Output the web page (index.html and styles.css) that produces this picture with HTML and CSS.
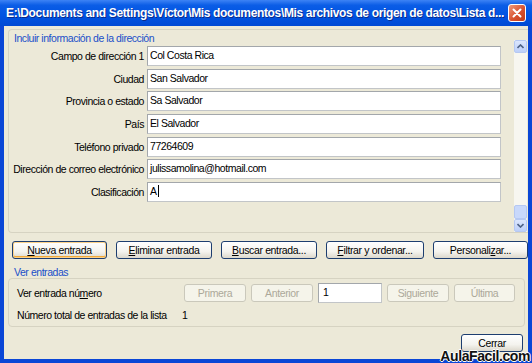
FILE: index.html
```html
<!DOCTYPE html>
<html lang="es">
<head>
    <meta charset="UTF-8">
    <title>Lista de direcciones</title>
    <link rel="stylesheet" href="styles.css">
</head>
<body>
    <div class="window">
        <div class="titlebar">
            <span class="title">E:\Documents and Settings\Víctor\Mis documentos\Mis archivos de origen de datos\Lista d...</span>
            <span class="close">
                <svg width="16" height="16" viewBox="0 0 16 16">
                    <path d="M4.5 4.5 L11.5 11.5 M11.5 4.5 L4.5 11.5" stroke="#fff" stroke-width="2" stroke-linecap="round"/>
                </svg>
            </span>
        </div>

        <div class="client">
            <div class="panel">
                <div class="fields">
                    <div class="legend">Incluir información de la dirección</div>
                    <div class="form">
                        <label>Campo de dirección 1</label><div class="field">Col Costa Rica</div>
                        <label>Ciudad</label><div class="field">San Salvador</div>
                        <label>Provincia o estado</label><div class="field">Sa Salvador</div>
                        <label>País</label><div class="field">El Salvador</div>
                        <label>Teléfono privado</label><div class="field">77264609</div>
                        <label>Dirección de correo electrónico</label><div class="field">julissamolina@hotmail.com</div>
                        <label>Clasificación</label><div class="field">A<span class="caret"></span></div>
                    </div>
                </div>
                <div class="scrollbar">
                    <div class="sb-btn">
                        <svg width="7" height="5" viewBox="0 0 7 5"><path d="M0.5 4 L3.5 1 L6.5 4" fill="none" stroke="#4d6185" stroke-width="1.6"/></svg>
                    </div>
                    <div class="sb-track"></div>
                    <div class="sb-thumb"></div>
                    <div class="sb-btn">
                        <svg width="7" height="5" viewBox="0 0 7 5"><path d="M0.5 1 L3.5 4 L6.5 1" fill="none" stroke="#4d6185" stroke-width="1.6"/></svg>
                    </div>
                </div>
            </div>

            <div class="actions">
                <button class="btn btn-default w95"><u>N</u>ueva entrada</button>
                <button class="btn w96"><u>E</u>liminar entrada</button>
                <button class="btn w96"><u>B</u>uscar entrada...</button>
                <button class="btn w98"><u>F</u>iltrar y ordenar...</button>
                <button class="btn w95">Personali<u>z</u>ar...</button>
            </div>

            <div class="legend legend-ver">Ver entradas</div>
            <div class="group">
                <div class="nav-row">
                    <span class="nav-label">Ver entrada nú<u>m</u>ero</span>
                    <button class="btn disabled w62">Primera</button>
                    <button class="btn disabled w62">Anterior</button>
                    <div class="field num">1</div>
                    <button class="btn disabled w62">Siguiente</button>
                    <button class="btn disabled w61">Última</button>
                </div>
                <div class="total-row">
                    <span class="nav-label total-label">Número total de entradas de la lista</span>
                    <span>1</span>
                </div>
            </div>

            <div class="footer">
                <button class="btn w62">Cerrar</button>
            </div>
        </div>

        <div class="watermark">AulaFacil.com</div>
    </div>
</body>
</html>
```

FILE: styles.css
```css
body {
    margin: 0;
    padding: 0;
    font-family: "Liberation Sans", Arial, sans-serif;
    background: #fff;
}
.window {
    position: relative;
    width: 532px;
    height: 363px;
    background: #0a46d6;
    display: flex;
    flex-direction: column;
    overflow: hidden;
}
.titlebar {
    height: 26px;
    flex: none;
    display: flex;
    align-items: center;
    padding-left: 6px;
    background: linear-gradient(#3d83f5 0%, #0b5de6 20%, #0054e3 55%, #0049d4 100%);
}
.title {
    color: #fff;
    font-weight: bold;
    font-size: 12px;
    letter-spacing: -0.35px;
    white-space: nowrap;
    text-shadow: 1px 1px 0 #0b2a8a;
    flex: 1;
}
.close {
    width: 16px;
    height: 16px;
    margin-right: 6px;
    border: 1px solid #fff;
    border-radius: 3px;
    background: linear-gradient(135deg, #ef9a7c, #d8522f 55%, #c13b17);
    display: flex;
}
.client {
    flex: 1;
    margin: 0 4px 4px 4px;
    background: #ece9d8;
    padding-left: 4px;
    font-size: 10.5px;
    letter-spacing: -0.45px;
    color: #000;
}
.panel {
    margin-top: 3px;
    height: 202px;
    display: flex;
    border: 1px solid #d6d3c2;
    border-right: none;
    border-radius: 4px 0 0 4px;
}
.fields {
    flex: 1;
}
.legend {
    color: #1a4fc9;
    height: 12px;
    line-height: 12px;
    padding-left: 5px;
    margin-top: 2px;
}
.form {
    margin-top: 2px;
    display: grid;
    grid-template-columns: 138px 354px;
    grid-auto-rows: 20px;
    row-gap: 2.67px;
}
.form label {
    text-align: right;
    padding-right: 3px;
    line-height: 20px;
    white-space: nowrap;
}
.field {
    box-sizing: border-box;
    height: 20px;
    border: 1px solid #a3a7ab;
    border-right-color: #c2c5c8;
    border-bottom-color: #c2c5c8;
    background: #fff;
    padding-left: 2px;
    line-height: 16px;
    white-space: nowrap;
}
.caret {
    display: inline-block;
    width: 1px;
    height: 12px;
    background: #000;
    vertical-align: -2px;
    margin-left: 1px;
}
.scrollbar {
    width: 13px;
    margin: 10px 1px 0 0;
    display: flex;
    flex-direction: column;
    background: #f7f6f0;
}
.sb-btn {
    height: 13px;
    flex: none;
    box-sizing: border-box;
    border: 1px solid #b5c8f2;
    border-radius: 2px;
    background: linear-gradient(#dbe6fd, #bccff9);
    display: flex;
    align-items: center;
    justify-content: center;
}
.sb-track {
    flex: 1;
}
.sb-thumb {
    height: 14px;
    box-sizing: border-box;
    border: 1px solid #b5c8f2;
    border-radius: 2px;
    background: #c8d8fb;
}
.actions {
    display: flex;
    gap: 9px;
    padding-left: 4px;
    margin-top: 8px;
}
.btn {
    box-sizing: border-box;
    height: 18px;
    padding: 0;
    border: 1px solid #1d3e70;
    border-radius: 3px;
    background: linear-gradient(#ffffff, #f4f3ee 60%, #dcd8cc);
    font-family: "Liberation Sans", Arial, sans-serif;
    font-size: 10.5px;
    letter-spacing: -0.35px;
    color: #000;
}
.btn-default {
    box-shadow: inset 0 0 0 1px #fcd28a, inset 0 -1px 0 1px #f0a93a;
}
.btn.disabled {
    border-color: #cac8bb;
    background: #f5f4ea;
    color: #aca899;
}
.w95 { width: 95px; }
.w96 { width: 96px; }
.w98 { width: 98px; }
.w62 { width: 62px; }
.w61 { width: 61px; }
.legend-ver {
    padding-left: 6px;
    margin-top: 7px;
}
.group {
    box-sizing: border-box;
    width: 517px;
    height: 49px;
    border: 1px solid #d6d3c2;
    border-radius: 4px;
}
.nav-row {
    display: flex;
    align-items: center;
    gap: 5px;
    margin-top: 4px;
    padding-left: 8px;
}
.nav-label {
    width: 162px;
}
.field.num {
    width: 64px;
    flex: none;
    padding-left: 4px;
}
.total-row {
    display: flex;
    padding-left: 8px;
    margin-top: 6px;
    line-height: 12px;
}
.total-label {
    width: 165px;
}
.footer {
    display: flex;
    justify-content: flex-end;
    padding-right: 5px;
    margin-top: 7px;
}
.watermark {
    position: absolute;
    right: 2px;
    bottom: 0;
    line-height: 13px;
    font-weight: bold;
    font-size: 14px;
    letter-spacing: -0.4px;
    color: #111;
    text-shadow: -1px 0 #fff, 1px 0 #fff, 0 -1px #fff, 0 1px #fff;
}
```
